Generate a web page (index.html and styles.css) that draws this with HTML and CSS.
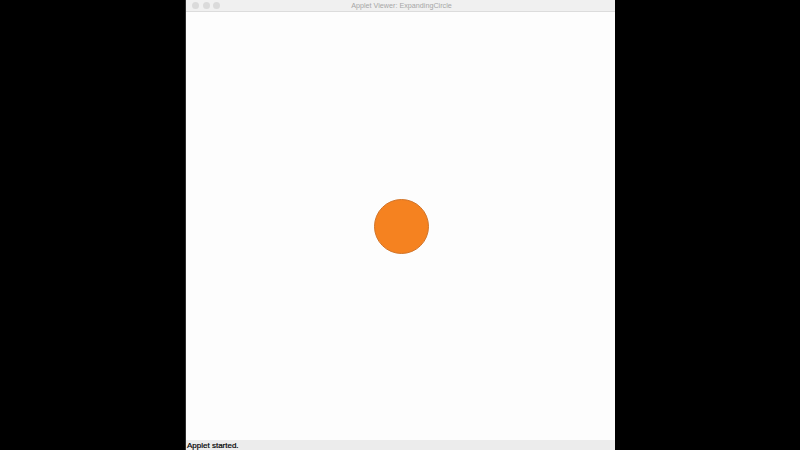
FILE: index.html
```html
<!DOCTYPE html>
<html>
<head>
<meta charset="utf-8">
<link rel="stylesheet" href="styles.css">
</head>
<body>
<div class="screen">
  <div class="window">
    <div class="titlebar">
      <div class="lights">
        <span class="light"></span>
        <span class="light"></span>
        <span class="light"></span>
      </div>
      <div class="title">Applet Viewer: ExpandingCircle</div>
    </div>
    <div class="canvas">
      <div class="circle"></div>
    </div>
    <div class="status">Applet started.</div>
  </div>
</div>
</body>
</html>
```
FILE: styles.css
```css
html, body {
  margin: 0;
  padding: 0;
  background: #000;
  width: 800px;
  height: 450px;
  overflow: hidden;
}
.screen {
  display: flex;
  height: 450px;
  padding-left: 185px;
  box-sizing: border-box;
}
.window {
  width: 430px;
  height: 450px;
  display: flex;
  flex-direction: column;
  background: #fdfdfd;
  border-left: 1px solid #2e2e2e;
  box-sizing: border-box;
}
.titlebar {
  height: 12px;
  background: #f0f0f0;
  border-bottom: 1px solid #dcdcdc;
  box-sizing: border-box;
  position: relative;
  display: flex;
  align-items: center;
  justify-content: center;
}
.lights {
  position: absolute;
  left: 6px;
  top: 2px;
  display: flex;
  gap: 3.5px;
}
.light {
  width: 7px;
  height: 7px;
  border-radius: 50%;
  background: #dadada;
  display: block;
}
.title {
  font-family: "Liberation Sans", Arial, sans-serif;
  font-size: 7.2px;
  line-height: 12px;
  color: #a6a6a6;
  padding-left: 2px;
}
.canvas {
  flex: 1;
  display: flex;
  align-items: center;
  justify-content: center;
  padding-left: 2px;
  padding-top: 1px;
}
.circle {
  width: 55px;
  height: 55px;
  border-radius: 50%;
  background: #f58220;
  border: 1px solid #d27428;
  box-sizing: border-box;
}
.status {
  height: 9px;
  background: #ececec;
  font-family: "Liberation Sans", Arial, sans-serif;
  font-size: 8px;
  line-height: 9px;
  color: #000;
  padding-left: 1px;
  padding-top: 1px;
  white-space: nowrap;
  -webkit-text-stroke: 0.2px #000;
}
```
